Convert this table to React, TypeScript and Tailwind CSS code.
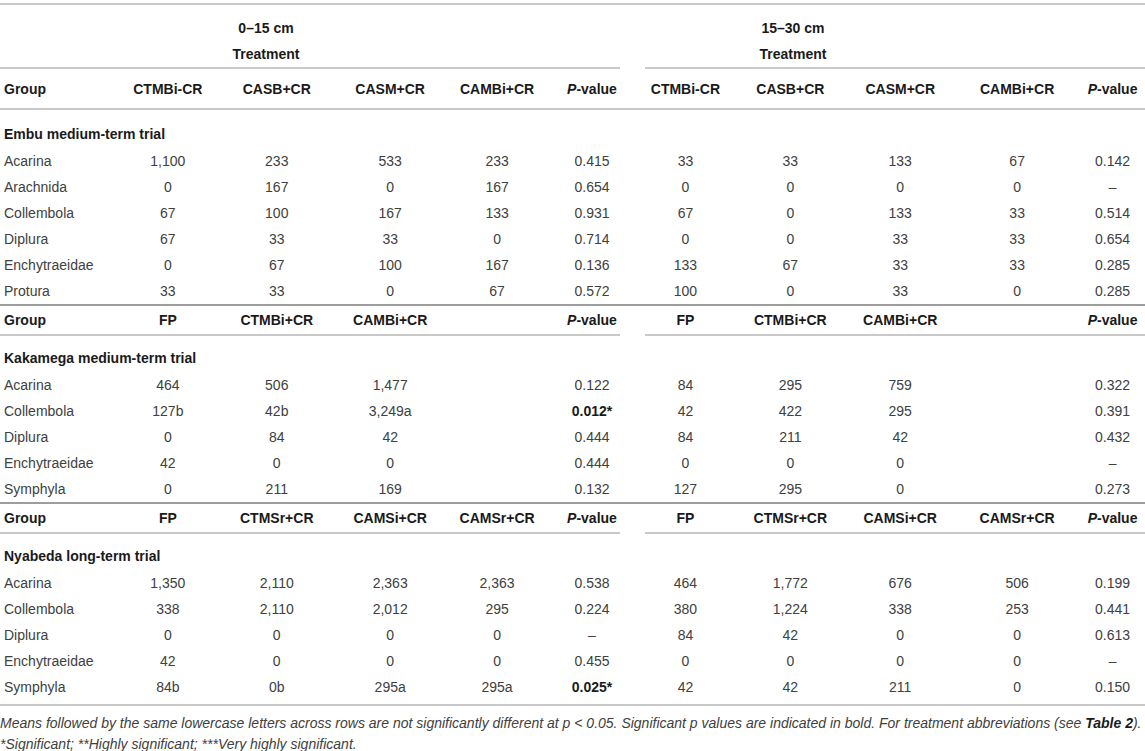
import React from "react";

type Cell = React.ReactNode;

const L_W = [116, 104, 114, 113, 101, 89];
const R_W = [98, 112, 108, 126, 65];

const B = ({ children }: { children: React.ReactNode }) => (
  <span className="font-bold text-[#1a1a1a]">{children}</span>
);

const PV = () => (
  <span className="font-bold text-[#1a1a1a]">
    <i>P</i>-value
  </span>
);

function Row({
  label,
  left,
  right,
  h,
  bold,
}: {
  label: Cell;
  left: Cell[];
  right: Cell[];
  h: string;
  bold?: boolean;
}) {
  return (
    <div className={`flex items-center ${h} ${bold ? "font-bold text-[#1a1a1a]" : "text-[#404040]"}`}>
      <div style={{ width: L_W[0] }} className="pl-[4px] whitespace-nowrap">
        {label}
      </div>
      {left.map((c, i) => (
        <div key={i} style={{ width: L_W[i + 1] }} className="text-center whitespace-nowrap">
          {c}
        </div>
      ))}
      {right.map((c, i) => (
        <div key={i} style={{ width: R_W[i] }} className="text-center whitespace-nowrap">
          {c}
        </div>
      ))}
    </div>
  );
}

const Thin = () => <div className="h-[2px] bg-[#c9c9c9]" />;
const Thick = () => <div className="h-[2px] bg-[#9d9d9d]" />;
const Split = () => (
  <div className="flex h-[2px]">
    <div className="w-[620px] bg-[#c9c9c9]" />
    <div className="w-[25px]" />
    <div className="flex-1 bg-[#c9c9c9]" />
  </div>
);

const Title = ({ children, h }: { children: React.ReactNode; h: string }) => (
  <div className={`flex items-end ${h} pb-[5px] pl-[4px] font-bold text-[#1a1a1a]`}>{children}</div>
);

const embu: [string, Cell[], Cell[]][] = [
  ["Acarina", ["1,100", "233", "533", "233", "0.415"], ["33", "33", "133", "67", "0.142"]],
  ["Arachnida", ["0", "167", "0", "167", "0.654"], ["0", "0", "0", "0", "–"]],
  ["Collembola", ["67", "100", "167", "133", "0.931"], ["67", "0", "133", "33", "0.514"]],
  ["Diplura", ["67", "33", "33", "0", "0.714"], ["0", "0", "33", "33", "0.654"]],
  ["Enchytraeidae", ["0", "67", "100", "167", "0.136"], ["133", "67", "33", "33", "0.285"]],
  ["Protura", ["33", "33", "0", "67", "0.572"], ["100", "0", "33", "0", "0.285"]],
];

const kakamega: [string, Cell[], Cell[]][] = [
  ["Acarina", ["464", "506", "1,477", "", "0.122"], ["84", "295", "759", "", "0.322"]],
  ["Collembola", ["127b", "42b", "3,249a", "", <B key="b">0.012*</B>], ["42", "422", "295", "", "0.391"]],
  ["Diplura", ["0", "84", "42", "", "0.444"], ["84", "211", "42", "", "0.432"]],
  ["Enchytraeidae", ["42", "0", "0", "", "0.444"], ["0", "0", "0", "", "–"]],
  ["Symphyla", ["0", "211", "169", "", "0.132"], ["127", "295", "0", "", "0.273"]],
];

const nyabeda: [string, Cell[], Cell[]][] = [
  ["Acarina", ["1,350", "2,110", "2,363", "2,363", "0.538"], ["464", "1,772", "676", "506", "0.199"]],
  ["Collembola", ["338", "2,110", "2,012", "295", "0.224"], ["380", "1,224", "338", "253", "0.441"]],
  ["Diplura", ["0", "0", "0", "0", "–"], ["84", "42", "0", "0", "0.613"]],
  ["Enchytraeidae", ["42", "0", "0", "0", "0.455"], ["0", "0", "0", "0", "–"]],
  ["Symphyla", ["84b", "0b", "295a", "295a", <B key="b">0.025*</B>], ["42", "42", "211", "0", "0.150"]],
];

const DataRows = ({ rows }: { rows: [string, Cell[], Cell[]][] }) => (
  <>
    {rows.map(([l, a, b]) => (
      <Row key={l} label={l} left={a} right={b} h="h-[26px]" />
    ))}
  </>
);

export default function App() {
  return (
    <div
      className="w-[1145px] bg-white pt-[3px] text-[14px] leading-[18px]"
      style={{ fontFamily: '"Liberation Sans", Arial, Helvetica, sans-serif' }}
    >
      <Thin />
      {/* header block */}
      <div className="flex h-[62px] font-bold text-[#1a1a1a]">
        <div className="w-[620px] flex flex-col">
          <div className="flex h-[36px] items-end pb-[4px]">
            <div className="w-[226px]" />
            <div className="w-[80px] text-center">0–15 cm</div>
          </div>
          <div className="flex h-[26px] items-center">
            <div className="w-[226px]" />
            <div className="w-[80px] text-center">Treatment</div>
          </div>
        </div>
        <div className="w-[25px]" />
        <div className="flex-1 flex flex-col">
          <div className="flex h-[36px] items-end pb-[4px]">
            <div className="w-[108px]" />
            <div className="w-[80px] text-center">15–30 cm</div>
          </div>
          <div className="flex h-[26px] items-center">
            <div className="w-[108px]" />
            <div className="w-[80px] text-center">Treatment</div>
          </div>
        </div>
      </div>
      <Split />
      <Row
        bold
        h="h-[39px]"
        label="Group"
        left={["CTMBi-CR", "CASB+CR", "CASM+CR", "CAMBi+CR", <PV key="p" />]}
        right={["CTMBi-CR", "CASB+CR", "CASM+CR", "CAMBi+CR", <PV key="p" />]}
      />
      <Thin />
      <Title h="h-[38px]">Embu medium-term trial</Title>
      <DataRows rows={embu} />
      <Thick />
      <Row
        bold
        h="h-[28px]"
        label="Group"
        left={["FP", "CTMBi+CR", "CAMBi+CR", "", <PV key="p" />]}
        right={["FP", "CTMBi+CR", "CAMBi+CR", "", <PV key="p" />]}
      />
      <Split />
      <Title h="h-[36px]">Kakamega medium-term trial</Title>
      <DataRows rows={kakamega} />
      <Thick />
      <Row
        bold
        h="h-[28px]"
        label="Group"
        left={["FP", "CTMSr+CR", "CAMSi+CR", "CAMSr+CR", <PV key="p" />]}
        right={["FP", "CTMSr+CR", "CAMSi+CR", "CAMSr+CR", <PV key="p" />]}
      />
      <Split />
      <Title h="h-[36px]">Nyabeda long-term trial</Title>
      <DataRows rows={nyabeda} />
      <div className="h-[4px]" />
      <Thin />
      <div className="pt-[7px] text-[14px] leading-[21px] italic text-[#404040]">
        <div className="whitespace-nowrap">
          Means followed by the same lowercase letters across rows are not significantly different at p {"<"} 0.05.
          Significant p values are indicated in bold. For treatment abbreviations (see{" "}
          <b className="text-[#1a1a1a]">Table 2</b>).
        </div>
        <div>*Significant; **Highly significant; ***Very highly significant.</div>
      </div>
    </div>
  );
}
